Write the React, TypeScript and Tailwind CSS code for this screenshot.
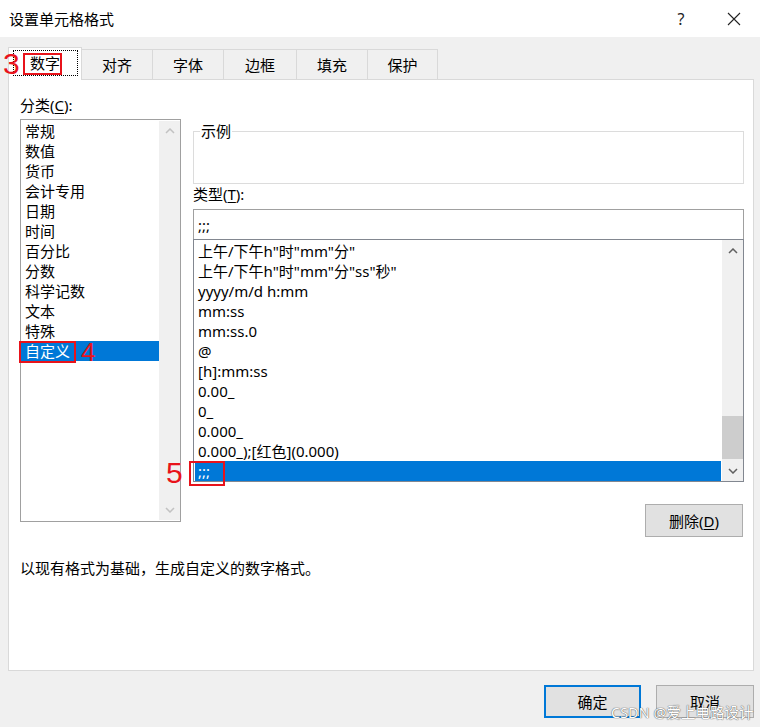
import React from "react";

const Up = ({ c }: { c: string }) => (
  <svg width="10" height="6" viewBox="0 0 10 6">
    <path d="M1 5 L5 1 L9 5" fill="none" stroke={c} strokeWidth="1.5" />
  </svg>
);
const Down = ({ c }: { c: string }) => (
  <svg width="10" height="6" viewBox="0 0 10 6">
    <path d="M1 1 L5 5 L9 1" fill="none" stroke={c} strokeWidth="1.5" />
  </svg>
);

const cats = ["常规", "数值", "货币", "会计专用", "日期", "时间", "百分比", "分数", "科学记数", "文本", "特殊", "自定义"];
const types = [
  '上午/下午h"时"mm"分"',
  '上午/下午h"时"mm"分"ss"秒"',
  "yyyy/m/d h:mm",
  "mm:ss",
  "mm:ss.0",
  "@",
  "[h]:mm:ss",
  "0.00_",
  "0_",
  "0.000_",
  "0.000_);[红色](0.000)",
  ";;;",
];

export default function App() {
  return (
    <div className="relative w-[760px] h-[727px] bg-[#f0f0f0] font-['Noto_Sans','Noto_Sans_CJK_SC',sans-serif] text-[15px] text-black overflow-hidden flex flex-col">
      {/* title bar */}
      <div className="h-[37px] bg-white flex items-center shrink-0">
        <span className="pl-[9px] flex-1 leading-[20px]">设置单元格格式</span>
        <span className="w-[54px] text-center text-[16px] leading-[20px] text-[#222]">?</span>
        <div className="w-[52px] flex justify-center">
          <svg width="14" height="14" viewBox="0 0 14 14">
            <path d="M1 1 L13 13 M13 1 L1 13" stroke="#222" strokeWidth="1.1" />
          </svg>
        </div>
      </div>

      {/* tabs */}
      <div className="mt-[10px] h-[33px] pl-[8px] flex items-end shrink-0">
        <div className="relative z-10 w-[74px] h-[33px] bg-white border border-b-0 border-[#d9d9d9] flex items-center justify-center pb-[2px]">
          <div className="w-[65px] h-[26px] border border-dotted border-black flex items-center justify-center leading-[20px]">数字</div>
        </div>
        {[
          ["对齐", "w-[72px]"],
          ["字体", "w-[72px]"],
          ["边框", "w-[74px]"],
          ["填充", "w-[72px]"],
          ["保护", "w-[71px]"],
        ].map(([t, w]) => (
          <div key={t} className={`${w} -ml-px h-[31px] bg-[#f0f0f0] border border-b-0 border-[#d9d9d9] flex items-center justify-center leading-[20px]`}>
            {t}
          </div>
        ))}
      </div>

      {/* panel */}
      <div className="-mt-px ml-[8px] w-[746px] h-[592px] bg-white border border-[#d9d9d9] pl-[11px] pt-[15px] flex flex-col shrink-0">
        <div className="flex gap-[12px] items-start">
          {/* left column */}
          <div className="w-[161px] flex flex-col">
            <div className="h-[20px] leading-[20px]">
              分类(<span className="underline underline-offset-2">C</span>):
            </div>
            <div className="mt-[4px] h-[403px] border border-[#a0a0a0] flex">
              <div className="flex-1 pt-[1px] flex flex-col">
                {cats.map((c, i) => (
                  <div
                    key={c}
                    className={`h-[20px] leading-[20px] pl-[4px] ${i === cats.length - 1 ? "bg-[#0078d7] text-white" : ""}`}
                  >
                    {c}
                  </div>
                ))}
              </div>
              <div className="w-[21px] my-px bg-[#f0f0f0] flex flex-col justify-between">
                <div className="h-[20px] flex items-center justify-center">
                  <Up c="#c2c2c2" />
                </div>
                <div className="h-[20px] flex items-center justify-center">
                  <Down c="#c2c2c2" />
                </div>
              </div>
            </div>
          </div>

          {/* right column */}
          <div className="w-[551px] pt-[26px] flex flex-col">
            <fieldset className="border border-[#dcdcdc]">
              <legend className="ml-[6px] px-[1px] leading-[20px]">示例</legend>
              <div className="h-[42px]" />
            </fieldset>
            <div className="h-[20px] leading-[20px]">
              类型(<span className="underline underline-offset-2">T</span>):
            </div>
            <div className="mt-[5px] h-[31px] border border-[#a0a0a0] flex items-center pl-[4px] leading-[20px]">;;;</div>
            <div className="-mt-px h-[243px] border border-[#828790] flex">
              <div className="flex-1 pt-[1px] px-[1px] flex flex-col">
                {types.map((t, i) => (
                  <div
                    key={t}
                    className={`h-[20px] leading-[20px] pl-[3px] whitespace-pre ${i === types.length - 1 ? "bg-[#0078d7] text-white" : ""}`}
                  >
                    {t}
                  </div>
                ))}
              </div>
              <div className="w-[21px] bg-[#f0f0f0] flex flex-col">
                <div className="h-[21px] flex items-center justify-center">
                  <Up c="#606060" />
                </div>
                <div className="flex-1" />
                <div className="h-[43px] bg-[#cdcdcd]" />
                <div className="h-[20px] mt-[2px] flex items-center justify-center">
                  <Down c="#606060" />
                </div>
              </div>
            </div>
            <div className="mt-[22px] mr-px self-end w-[98px] h-[33px] bg-[#e1e1e1] border border-[#adadad] flex items-center justify-center leading-[20px]">
              删除(<span className="underline underline-offset-2">D</span>)
            </div>
          </div>
        </div>
        <div className="mt-[21px] h-[20px] leading-[20px]">以现有格式为基础，生成自定义的数字格式。</div>
      </div>

      {/* bottom buttons */}
      <div className="mt-[14px] pr-[6px] flex justify-end gap-[15px] shrink-0">
        <div className="w-[97px] h-[33px] bg-[#e1e1e1] border-2 border-[#0078d7] flex items-center justify-center leading-[20px]">确定</div>
        <div className="w-[98px] h-[33px] bg-[#e1e1e1] border border-[#adadad] flex items-center justify-center leading-[20px]">取消</div>
      </div>

      {/* watermark */}
      <div className="absolute z-20 left-[611px] top-[702px] text-[14.5px] leading-[20px] text-white [text-shadow:0_0_1px_#555,0_0_1px_#555] whitespace-nowrap">
        CSDN @爱上电路设计
      </div>

      {/* annotations */}
      <div className="absolute z-20 left-[3px] top-[49px] font-['Liberation_Sans',sans-serif] text-[30px] leading-[30px] text-[#e8131b]">3</div>
      <div className="absolute z-20 left-[23px] top-[53px] w-[39px] h-[22px] border-2 border-[#e8131b]" />
      <div className="absolute z-20 left-[19px] top-[341px] w-[57px] h-[22px] border-2 border-[#e8131b]" />
      <div className="absolute z-20 left-[81px] top-[339px] font-['Liberation_Sans',sans-serif] text-[26px] leading-[26px] text-[#e8131b]">4</div>
      <div className="absolute z-20 left-[166px] top-[458px] font-['Liberation_Sans',sans-serif] text-[30px] leading-[30px] text-[#e8131b]">5</div>
      <div className="absolute z-20 left-[189px] top-[461px] w-[36px] h-[25px] border-2 border-[#e8131b]" />
    </div>
  );
}
